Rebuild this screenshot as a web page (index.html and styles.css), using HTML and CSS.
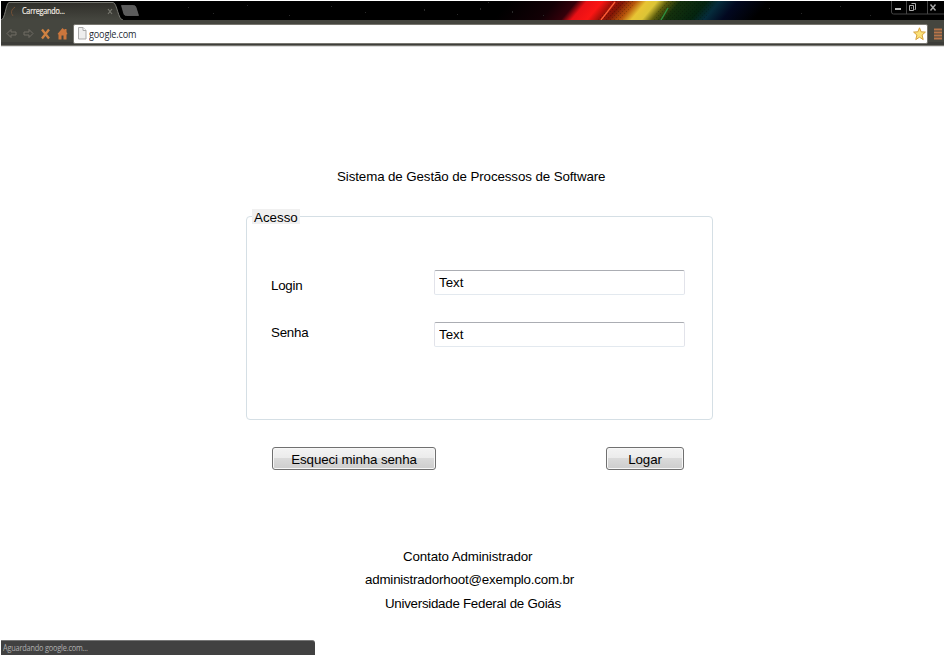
FILE: index.html
```html
<!DOCTYPE html>
<html lang="pt-BR">
<head>
<meta charset="utf-8">
<title>Carregando...</title>
<link rel="stylesheet" href="styles.css">
</head>
<body>
<div class="browser">
  <header class="tabstrip">
    <svg class="theme" width="943" height="19" viewBox="1 1 943 19" aria-hidden="true">
      <defs>
        <linearGradient id="spectrum" gradientUnits="userSpaceOnUse" x1="500" y1="0" x2="760" y2="0">
          <stop offset="0" stop-color="#000"/><stop offset=".18" stop-color="#120005"/><stop offset=".26" stop-color="#34000a"/>
          <stop offset=".3" stop-color="#e81015"/><stop offset=".36" stop-color="#fa1614"/><stop offset=".4" stop-color="#a81008"/>
          <stop offset=".44" stop-color="#801606"/><stop offset=".49" stop-color="#b8580c"/><stop offset=".53" stop-color="#e8c434"/><stop offset=".57" stop-color="#dcc436"/>
          <stop offset=".61" stop-color="#5c5c0c"/><stop offset=".66" stop-color="#14300c"/><stop offset=".76" stop-color="#04240f"/>
          <stop offset=".81" stop-color="#052c3c"/><stop offset=".88" stop-color="#020820"/><stop offset="1" stop-color="#000"/>
        </linearGradient>
        <linearGradient id="tab" x1="0" y1="0" x2="0" y2="1"><stop offset="0" stop-color="#302f2a"/><stop offset="1" stop-color="#45463f"/></linearGradient>
        <pattern id="mesh" width="4" height="4" patternUnits="userSpaceOnUse"><path d="M0 1h1v1H0zM2 3h1v1H2z" fill="#000" opacity=".2"/></pattern>
      </defs>
      <path d="M1 1h943v19H1z"/>
      <path d="M490 1h280v19H490z" fill="url(#spectrum)" transform="translate(10 0) skewX(-40)"/>
      <path d="M612 1h24l-14 19h-24zM665 1h50l-10 19h-53z" fill="url(#mesh)"/>
      <path d="M615 2l-14 18" stroke="#ff6038" stroke-width="1.3"/>
      <path d="M668 8l-7 12" stroke="#2e9140" stroke-width="1.4"/>
      <g fill="#292929"><path d="M188 7h1v1h-1zM213 13h1v1h-1zM247 5h1v1h-1zM289 15h1v1h-1zM331 6h1v1h-1zM365 12h1v1h-1zM424 9h1v2h-1zM457 14h1v1h-1zM480 8h1v2h-1zM488 2h1v1h-1zM512 11h1v2h-1zM543 15h1v1h-1zM769 8h1v1h-1zM801 13h1v1h-1zM840 6h1v1h-1zM870 15h1v1h-1z"/></g>
      <path d="M1 20C5 20 6 3 9 3h104c4 0 5 17 10 17z" fill="url(#tab)"/>
      <path d="M1 20C5 20 6 2.500 9 2.500h104c4 0 5 17.500 10 17.500" fill="none" stroke="#85857e" stroke-width=".9"/>
      <path d="M121.500 5.500h12c1.500 0 2 .7 2.500 2l2.500 8h-12c-1.700 0-2.200-.6-2.700-2z" fill="#5c5c5c" stroke="#6b6b6b" stroke-width=".7"/>
      <path d="M15 7q-6 4-2 9" fill="none" stroke="#735035"/>
      <path d="M108 9l4 5m0-5l-4 5" stroke="#77776f" stroke-width="1.2"/>
      <path d="M891.500 1v11q0 2 2 2H944M906.500 1v13M927.500 1v13" fill="none" stroke="#454545"/>
      <path d="M895 8h6v2h-6z" fill="#bbb"/>
      <path d="M911.500 3.500h4v6h-1M909.500 5.500h4v5h-4zM911 8h1" fill="none" stroke="#aaa"/>
      <path d="M930.500 4.500l5 6m0-6l-5 6" stroke="#aaa" stroke-width="1.4"/>
    </svg>
    <span class="tab-title">Carregando...</span>
  </header>
  <nav class="toolbar">
    <svg class="nav-icons" width="72" height="27" viewBox="1 20 72 27" aria-hidden="true">
      <path d="M7 33.500l4-4v2.500h5v3h-5v2.500zM33 33.500l-4-4v2.500h-5v3h5v2.500z" fill="none" stroke="#706c65"/>
      <path d="M42 29.500l7 9m0-9l-7 9" stroke="#cd8142" stroke-width="2.300"/>
      <path d="M57.500 34l5-6 2 2v-1h2v3l1 2-1 .5v5h-3v-4h-2v4h-3v-5z" fill="#cb763d"/>
    </svg>
    <div class="address">
      <svg width="9" height="13" viewBox="0 0 9 13" aria-hidden="true"><path d="M.5.500H5l3 3v8.500H.5z" fill="#eee" stroke="#aaa"/><path d="M5 .500v3h3" fill="#fff" stroke="#aaa"/></svg>
      <span class="url">google.com</span>
      <svg class="star" width="13" height="14" viewBox="0 0 13 14" aria-hidden="true"><path d="M6.500.8l1.600 4 4.300.3L9.100 8l1.100 4.600-3.700-2.400-3.700 2.400L3.900 8 .6 5.100l4.300-.3z" fill="#fbe178" stroke="#d5a13d"/></svg>
    </div>
    <svg class="menu" width="9" height="12" viewBox="0 0 9 12" aria-hidden="true"><path d="M0 1.500h8M0 4.500h8M0 7.500h8M0 10.500h8" stroke="#b8754a" stroke-width="1.900"/></svg>
  </nav>
  <main class="page">
    <h1 class="title">Sistema de Gestão de Processos de Software</h1>
    <form class="form">
      <fieldset class="access">
        <legend class="legend">Acesso</legend>
        <div class="row"><label class="label" for="login">Login</label><input class="field" id="login" value="Text"></div>
        <div class="row row-password"><label class="label" for="senha">Senha</label><input class="field" id="senha" value="Text"></div>
      </fieldset>
      <div class="actions">
        <button class="button forgot" type="button">Esqueci minha senha</button>
        <button class="button submit" type="button">Logar</button>
      </div>
    </form>
    <footer class="contact">
      <span class="contact-name">Contato Administrador</span>
      <span class="contact-mail">administradorhoot@exemplo.com.br</span>
      <span class="contact-school">Universidade Federal de Goiás</span>
    </footer>
  </main>
  <div class="status"><span class="status-text">Aguardando google.com...</span></div>
</div>
</body>
</html>
```
FILE: styles.css
```css
* { box-sizing: border-box; }
body {
  margin: 0;
  background: #fff;
  color: #000;
  font: 13.333px/16px "Liberation Sans", Arial, sans-serif;
}
.browser {
  display: flex;
  flex-direction: column;
  width: 944px;
  height: 655px;
  padding: 1px 0 0 1px;
  overflow: hidden;
}
.tabstrip { position: relative; height: 19px; flex: none; }
.theme { display: block; }
.tab-title {
  position: absolute;
  left: 21px;
  top: 4px;
  color: #f5eee6;
  font: 8.500px/12px "Open Sans", sans-serif;
  letter-spacing: -0.200px;
  transform: scaleX(0.84);
  transform-origin: left;
  -webkit-text-stroke: 0.200px;
}
.toolbar {
  display: flex;
  align-items: center;
  flex: none;
  height: 27px;
  background: linear-gradient(#45463f 0 22px, #3d3d39 22px 25px, #77766f 25px 26px, #ddd 26px);
}
.nav-icons { flex: none; }
.address {
  display: flex;
  align-items: center;
  width: 855px;
  height: 20px;
  padding: 0 2px 0 4px;
  border: 1px solid #77766f;
  border-radius: 2px;
  background: #fff;
}
.url {
  margin-left: 2px;
  color: #252b35;
  font: 11px/16px "Open Sans", sans-serif;
  letter-spacing: -0.200px;
  transform: scaleX(0.83);
  transform-origin: left;
}
.star { margin-left: auto; margin-right: -1px; }
.menu { margin-left: 6px; }
.page { flex: 1; display: flex; flex-direction: column; }
.title {
  width: 268px;
  margin: 122px 0 0 336px;
  font-size: inherit;
  font-weight: 400;
  line-height: 16px;
  white-space: nowrap;
  letter-spacing: -0.100px;
}
.form { width: 467px; margin: 24px 0 0 245px; }
.access {
  height: 211px;
  margin: 0;
  padding: 46px 27px 0 24px;
  border: 1px solid #d5dfe5;
  border-radius: 4px;
}
.legend {
  width: 48px;
  height: 15px;
  margin-left: -19px;
  padding: 0 2px;
  background: #f0f0f0;
  line-height: 17px;
}
.row { display: flex; justify-content: space-between; align-items: flex-start; height: 25px; }
.row-password { margin-top: 27px; }
.label { margin-top: 8px; letter-spacing: -0.250px; }
.row-password .label { margin-top: 3px; }
.field {
  width: 251px;
  height: 25px;
  padding: 0 4px;
  border: 1px solid #e2e3ea;
  border-top-color: #abadb3;
  border-bottom-color: #e3e9ef;
  border-radius: 2px;
  background: #fff;
  color: #000;
  font: inherit;
}
.actions { display: flex; justify-content: space-between; margin: 27px 29px 0 26px; }
.button {
  height: 23px;
  padding: 3px 0 0;
  border: 1px solid #707070;
  border-radius: 3px;
  background: linear-gradient(#f3f3f3, #ebebeb 49%, #dadada 50%, #cdcdcd);
  box-shadow: inset 0 0 0 1px #f7f7f7;
  color: #000;
  font: inherit;
  letter-spacing: -0.100px;
}
.forgot { width: 164px; }
.submit { width: 78px; }
.contact { display: flex; flex-direction: column; gap: 7.400px; margin: 79px 0 0 364px; }
.contact-name { margin-left: 38px; letter-spacing: -0.120px; }
.contact-mail { letter-spacing: -0.190px; }
.contact-school { margin-left: 20px; letter-spacing: -0.270px; }
.status {
  flex: none;
  width: 314px;
  height: 15px;
  padding-left: 2px;
  border-top: 1px solid #777;
  border-radius: 0 3px 0 0;
  background: #414141;
  color: #b0b0b0;
  font: 8.500px/14px "Open Sans", sans-serif;
}
.status-text {
  display: inline-block;
  letter-spacing: -0.200px;
  transform: scaleX(0.86);
  transform-origin: left;
}
```
